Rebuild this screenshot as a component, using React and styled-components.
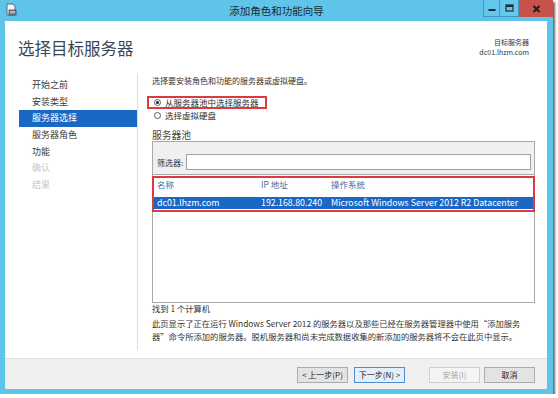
import React from 'react';
import styled, { createGlobalStyle } from 'styled-components';

const GlobalStyle = createGlobalStyle`
  html, body {
    margin: 0;
    padding: 0;
    background: #ffffff;
  }
  body {
    font-family: "Noto Sans CJK SC", "Noto Sans", sans-serif;
    color: #333;
  }
`;

const navItems = [
  { label: '开始之前' },
  { label: '安装类型' },
  { label: '服务器选择', active: true },
  { label: '服务器角色' },
  { label: '功能' },
  { label: '确认', disabled: true },
  { label: '结果', disabled: true },
];

const App = () => {
  return (
    <>
      <GlobalStyle />
      <Window>
        <TitleBar>
          <AppIcon>
            <svg width="12" height="13" viewBox="0 0 12 13">
              <path d="M1 1h6l2 2v9H1z" fill="#f4f4f4" stroke="#5b6b78" strokeWidth="1" />
              <rect x="3" y="7" width="7" height="5" fill="#7f8c96" stroke="#3f4d58" strokeWidth="0.8" />
              <rect x="4" y="8.5" width="5" height="1" fill="#d8e6ef" />
            </svg>
          </AppIcon>
          <Caption>添加角色和功能向导</Caption>
          <CaptionButtons>
            <CapButton>
              <svg width="8" height="8" viewBox="0 0 8 8">
                <rect x="0.5" y="5" width="7" height="2" fill="#1d2b35" />
              </svg>
            </CapButton>
            <CapButton $wide>
              <svg width="9" height="8" viewBox="0 0 9 8">
                <rect x="1" y="1" width="7" height="6" fill="none" stroke="#1d2b35" strokeWidth="1.2" />
                <rect x="1" y="1" width="7" height="2" fill="#1d2b35" />
              </svg>
            </CapButton>
            <CloseButton>
              <svg width="9" height="8" viewBox="0 0 9 8">
                <path d="M1.5 1l6 6M7.5 1l-6 6" stroke="#1c1c1c" strokeWidth="1.8" />
              </svg>
            </CloseButton>
          </CaptionButtons>
        </TitleBar>

        <Frame>
          <Client>
            <Header>
              <PageTitle>选择目标服务器</PageTitle>
              <TargetInfo>
                <div>目标服务器</div>
                <div>dc01.lhzm.com</div>
              </TargetInfo>
            </Header>

            <Main>
              <Nav>
                {navItems.map((item) => (
                  <NavItem key={item.label} $active={item.active} $disabled={item.disabled}>
                    {item.label}
                  </NavItem>
                ))}
              </Nav>

              <Content>
                <Intro>选择要安装角色和功能的服务器或虚拟硬盘。</Intro>
                <Marked>
                  <Radio $checked />
                  <RadioLabel>从服务器池中选择服务器</RadioLabel>
                </Marked>
                <RadioRow>
                  <Radio />
                  <RadioLabel>选择虚拟硬盘</RadioLabel>
                </RadioRow>

                <SectionTitle>服务器池</SectionTitle>
                <FilterPanel>
                  <FilterLabel>筛选器:</FilterLabel>
                  <FilterInput />
                </FilterPanel>
                <ServerList>
                  <MarkedList>
                    <ListRow $head>
                      <span>名称</span>
                      <span>IP 地址</span>
                      <span>操作系统</span>
                    </ListRow>
                    <ListRow $selected>
                      <span>dc01.lhzm.com</span>
                      <span>192.168.80.240</span>
                      <span>Microsoft Windows Server 2012 R2 Datacenter</span>
                    </ListRow>
                  </MarkedList>
                </ServerList>

                <Found>找到 1 个计算机</Found>
                <Description>
                  此页显示了正在运行 Windows Server 2012 的服务器以及那些已经在服务器管理器中使用“添加服务
                  <br />
                  器”命令所添加的服务器。脱机服务器和尚未完成数据收集的新添加的服务器将不会在此页中显示。
                </Description>
              </Content>
            </Main>

            <Footer>
              <Button>&lt; 上一步(P)</Button>
              <Button $default>下一步(N) &gt;</Button>
              <Button $disabled $gap>安装(I)</Button>
              <Button>取消</Button>
            </Footer>
          </Client>
        </Frame>
      </Window>
    </>
  );
};

export default App;

const Window = styled.div`
  width: 553px;
  height: 394px;
  background: #5fc4e9;
  display: flex;
  flex-direction: column;
  box-shadow: 2px 2px 2px rgba(0, 0, 0, 0.6);
`;

const TitleBar = styled.div`
  height: 21px;
  display: grid;
  grid-template-columns: 1fr auto 1fr;
  align-items: start;
`;

const AppIcon = styled.div`
  padding: 3px 0 0 6px;
  display: flex;
`;

const Caption = styled.div`
  font-size: 10.5px;
  line-height: 21px;
  color: #1c2a33;
`;

const CaptionButtons = styled.div`
  display: flex;
  justify-content: flex-end;
`;

const CapButton = styled.div`
  width: ${(p) => (p.$wide ? 20 : 17)}px;
  height: 17px;
  box-sizing: border-box;
  border: 1px solid #3d97c2;
  border-top: none;
  margin-left: -1px;
  display: flex;
  align-items: center;
  justify-content: center;
  background: #64c7eb;
`;

const CloseButton = styled.div`
  width: 34px;
  height: 17px;
  background: #c9514b;
  display: flex;
  align-items: center;
  justify-content: center;
`;

const Frame = styled.div`
  flex: 1;
  display: flex;
  padding: 0 6px 5px 5px;
  min-height: 0;
`;

const Client = styled.div`
  flex: 1;
  background: #ffffff;
  display: flex;
  flex-direction: column;
`;

const Header = styled.div`
  height: 47px;
  box-sizing: border-box;
  padding: 16px 18px 0 13px;
  display: flex;
  justify-content: space-between;
  align-items: flex-start;
`;

const PageTitle = styled.div`
  font-size: 16.5px;
  line-height: 22px;
  color: #3b4657;
`;

const TargetInfo = styled.div`
  margin-top: 1px;
  font-size: 7px;
  line-height: 9.5px;
  color: #333;
  text-align: right;
`;

const Main = styled.div`
  flex: 1;
  display: flex;
  min-height: 0;
`;

const Nav = styled.div`
  width: 133px;
  box-sizing: border-box;
  border-right: 1px solid #dcdcdc;
  margin: 5px 0 8px;
  padding-top: 4px;
  display: flex;
  flex-direction: column;
`;

const NavItem = styled.div`
  margin-left: 14px;
  padding-left: 13px;
  height: 16.7px;
  line-height: 16.7px;
  font-size: 9px;
  color: ${(p) => (p.$active ? '#ffffff' : p.$disabled ? '#c6c6c6' : '#3a3a3a')};
  background: ${(p) => (p.$active ? '#1a68c4' : 'transparent')};
`;

const Content = styled.div`
  flex: 1;
  padding: 7px 12px 0 14px;
  display: flex;
  flex-direction: column;
  align-items: stretch;
  font-size: 8px;
`;

const Intro = styled.div`
  line-height: 12px;
  color: #333;
`;

const RadioRow = styled.div`
  display: flex;
  align-items: center;
  gap: 4px;
  height: 12px;
  padding-left: 2px;
`;

const Marked = styled(RadioRow)`
  align-self: flex-start;
  height: 9px;
  margin: 9px 0 0 -5px;
  padding: 0 6px 0 5px;
  border: 2px solid #dc3a40;
`;

const Radio = styled.span`
  width: 7px;
  height: 7px;
  box-sizing: border-box;
  border-radius: 50%;
  border: 1px solid #5a5a5a;
  background: #fff;
  display: flex;
  align-items: center;
  justify-content: center;
  &::after {
    content: '';
    width: 3px;
    height: 3px;
    border-radius: 50%;
    background: ${(p) => (p.$checked ? '#1e1e1e' : 'transparent')};
  }
`;

const RadioLabel = styled.span`
  font-size: 8.5px;
  line-height: 9px;
  color: #2e2e2e;
`;

const SectionTitle = styled.div`
  margin-top: 9px;
  font-size: 9.75px;
  line-height: 11px;
  color: #444;
`;

const FilterPanel = styled.div`
  height: 34px;
  box-sizing: border-box;
  background: #f0f0f0;
  border: 1px solid #a9a9a9;
  padding: 12px 3px 4px 4px;
  display: flex;
  align-items: center;
  gap: 3px;
`;

const FilterLabel = styled.span`
  font-size: 8px;
  color: #333;
  white-space: nowrap;
`;

const FilterInput = styled.div`
  flex: 1;
  height: 16px;
  box-sizing: border-box;
  background: #fff;
  border: 1px solid #a0a0a0;
`;

const ServerList = styled.div`
  height: 128px;
  box-sizing: border-box;
  border: 1px solid #a9a9a9;
  border-top: none;
  background: #fff;
`;

const MarkedList = styled.div`
  margin: 1px -1px 0;
  border: 2px solid #dc3a40;
  padding-bottom: 1px;
  display: flex;
  flex-direction: column;
  gap: 7px;
`;

const ListRow = styled.div`
  display: grid;
  grid-template-columns: 104px 70px 1fr;
  padding-left: 3px;
  height: 12px;
  line-height: 12px;
  white-space: nowrap;
  color: ${(p) => (p.$selected ? '#ffffff' : p.$head ? '#3f6c9c' : '#333')};
  background: ${(p) => (p.$selected ? '#1a68c4' : 'transparent')};
  font-size: ${(p) => (p.$head ? '8.5px' : '8.8px')};
`;

const Found = styled.div`
  line-height: 10px;
  font-size: 8.3px;
  color: #333;
`;

const Description = styled.div`
  margin-top: 3.5px;
  line-height: 13px;
  font-size: 8.3px;
  color: #333;
  white-space: nowrap;
`;

const Footer = styled.div`
  height: 31px;
  box-sizing: border-box;
  background: #f0f0f0;
  border-top: 1px solid #dedede;
  padding: 8px 12px 0 0;
  display: flex;
  justify-content: flex-end;
  align-items: flex-start;
  gap: 6px;
`;

const Button = styled.div`
  width: 51px;
  height: 16px;
  box-sizing: border-box;
  margin-left: ${(p) => (p.$gap ? '18px' : '0')};
  margin-right: ${(p) => (p.$disabled ? '-2px' : '0')};
  border: 1px solid ${(p) => (p.$default ? '#4f8fcf' : p.$disabled ? '#cfcfcf' : '#acacac')};
  background: ${(p) => (p.$default ? '#e3effa' : p.$disabled ? '#f4f4f4' : '#e3e3e3')};
  color: ${(p) => (p.$disabled ? '#a6a6a6' : '#222')};
  font-size: 8px;
  line-height: 14px;
  text-align: center;
  white-space: nowrap;
`;
